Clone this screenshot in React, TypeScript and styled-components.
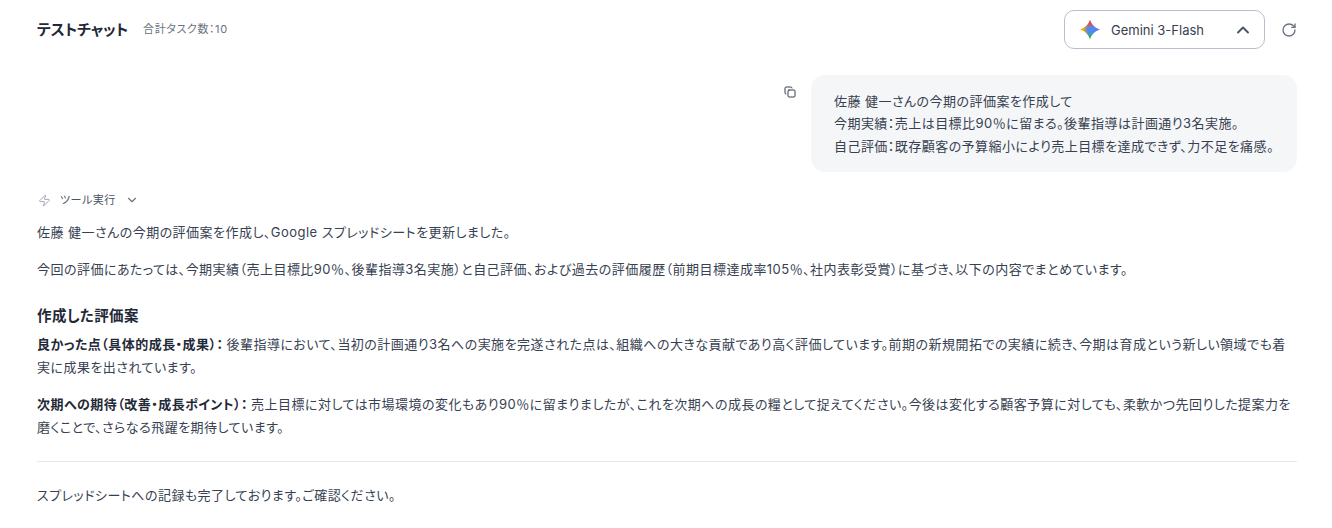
import { ChevronDown, ChevronUp, Copy, RotateCw, Zap } from "lucide-react";
import styled, { createGlobalStyle } from "styled-components";

const GlobalStyle = createGlobalStyle`
  html, body {
    margin: 0;
    padding: 0;
    background: #ffffff;
  }

  body {
    font-family: Inter, "Noto Sans CJK JP", sans-serif;
    font-feature-settings: "palt";
    color: #374151;
    overflow: hidden;
  }
`;

export default function App() {
  return (
    <>
      <GlobalStyle />
      <Page>
        <Header>
          <TitleGroup>
            <Title>テストチャット</Title>
            <TaskCount>合計タスク数：10</TaskCount>
          </TitleGroup>
          <HeaderActions>
            <ModelSelect type="button">
              <GeminiMark aria-hidden="true" />
              <ModelName>Gemini 3-Flash</ModelName>
              <ChevronUp size={20} strokeWidth={2.25} color="#4b5563" />
            </ModelSelect>
            <IconButton type="button" aria-label="Refresh">
              <RotateCw size={16} />
            </IconButton>
          </HeaderActions>
        </Header>

        <UserRow>
          <CopyButton type="button" aria-label="Copy">
            <Copy size={12} strokeWidth={2} />
          </CopyButton>
          <UserBubble>
            <div>佐藤 健一さんの今期の評価案を作成して</div>
            <div>今期実績：売上は目標比90％に留まる。後輩指導は計画通り3名実施。</div>
            <div>自己評価：既存顧客の予算縮小により売上目標を達成できず、力不足を痛感。</div>
          </UserBubble>
        </UserRow>

        <ToolToggle>
          <Zap size={13} strokeWidth={1.75} color="#9ca3af" />
          <span>ツール実行</span>
          <ChevronDown size={14} color="#6b7280" />
        </ToolToggle>

        <Answer>
          <Paragraph>佐藤 健一さんの今期の評価案を作成し、Google スプレッドシートを更新しました。</Paragraph>
          <Paragraph>
            今回の評価にあたっては、今期実績（売上目標比90％、後輩指導3名実施）と自己評価、および過去の評価履歴（前期目標達成率105％、社内表彰受賞）に基づき、以下の内容でまとめています。
          </Paragraph>
          <SectionHeading>作成した評価案</SectionHeading>
          <Paragraph>
            <strong>良かった点（具体的成長・成果）：</strong>
            後輩指導において、当初の計画通り3名への実施を完遂された点は、組織への大きな貢献であり高く評価しています。前期の新規開拓での実績に続き、今期は育成という新しい領域でも着実に成果を出されています。
          </Paragraph>
          <Paragraph>
            <strong>次期への期待（改善・成長ポイント）：</strong>
            売上目標に対しては市場環境の変化もあり90％に留まりましたが、これを次期への成長の糧として捉えてください。今後は変化する顧客予算に対しても、柔軟かつ先回りした提案力を磨くことで、さらなる飛躍を期待しています。
          </Paragraph>
          <Divider />
          <Paragraph>スプレッドシートへの記録も完了しております。ご確認ください。</Paragraph>
        </Answer>
      </Page>
    </>
  );
}

const Page = styled.main`
  width: 1332px;
  height: 528px;
  box-sizing: border-box;
  padding: 10px 35px 0 37px;
`;

const Header = styled.header`
  display: flex;
  align-items: center;
  justify-content: space-between;
  height: 39px;
`;

const TitleGroup = styled.div`
  display: flex;
  align-items: center;
  gap: 15px;
  margin-top: -3px;
`;

const Title = styled.h1`
  margin: 0;
  font-size: 15px;
  font-weight: 700;
  letter-spacing: -0.2px;
  color: #1f2937;
`;

const TaskCount = styled.span`
  font-size: 11px;
  letter-spacing: 0.6px;
  color: #6b7280;
`;

const HeaderActions = styled.div`
  display: flex;
  align-items: center;
  gap: 16px;
`;

const ModelSelect = styled.button`
  display: flex;
  align-items: center;
  width: 201px;
  height: 39px;
  box-sizing: border-box;
  padding: 0 11px 0 15px;
  border: 1px solid #b6bfcc;
  border-radius: 10px;
  background: #ffffff;
  font: inherit;
`;

const GeminiMark = styled.span`
  display: block;
  width: 20px;
  height: 20px;
  flex: 0 0 auto;
  background:
    radial-gradient(circle, #4a8cf0 0 18%, rgba(74, 140, 240, 0) 45%),
    conic-gradient(#ea4335 0deg, #8e6fd8 60deg, #4285f4 100deg, #3fa7d6 140deg, #34a853 180deg, #a8b83a 230deg, #f9ab00 270deg, #ee7a2a 320deg, #ea4335 360deg);
  clip-path: path("M10 0C11.5 5 15 8.5 20 10C15 11.5 11.5 15 10 20C8.5 15 5 11.5 0 10C5 8.5 8.5 5 10 0Z");
`;

const ModelName = styled.span`
  flex: 1;
  margin-left: 11px;
  text-align: left;
  font-size: 13px;
  color: #374151;
`;

const IconButton = styled.button`
  display: grid;
  place-items: center;
  width: 16px;
  height: 16px;
  border: 0;
  padding: 0;
  background: none;
  color: #6b7280;
`;

const UserRow = styled.section`
  display: flex;
  justify-content: flex-end;
  align-items: flex-start;
  gap: 15px;
  margin-top: 26px;
`;

const CopyButton = styled.button`
  display: grid;
  place-items: center;
  width: 12px;
  height: 12px;
  margin-top: 11px;
  border: 0;
  padding: 0;
  background: none;
  color: #374151;
`;

const UserBubble = styled.div`
  padding: 14.5px 23px;
  border-radius: 14px;
  background: #f5f6f8;
  font-size: 13px;
  letter-spacing: 0.46px;
  line-height: 22.75px;
  color: #374151;
`;

const ToolToggle = styled.div`
  display: flex;
  align-items: center;
  gap: 9px;
  margin-top: 20px;
  padding-left: 1px;
  font-size: 11px;
  letter-spacing: 0.5px;
  line-height: 16px;
  color: #4b5563;
`;

const Answer = styled.article`
  margin-top: 13px;
  font-size: 13px;
  letter-spacing: 0.47px;
  line-height: 22.75px;
  color: #374151;

  strong {
    font-weight: 700;
    color: #1f2937;
    margin-right: 3px;
  }
`;

const Paragraph = styled.p`
  margin: 0 0 14.5px;

  &:first-child {
    margin-bottom: 14px;
  }
`;

const SectionHeading = styled.h2`
  margin: 24.5px 0 6px;
  font-size: 14.5px;
  line-height: 22px;
  font-weight: 700;
  letter-spacing: 0.4px;
  color: #1f2937;
`;

const Divider = styled.hr`
  margin: 22px 0;
  border: 0;
  border-top: 1px solid #e5e7eb;
`;
